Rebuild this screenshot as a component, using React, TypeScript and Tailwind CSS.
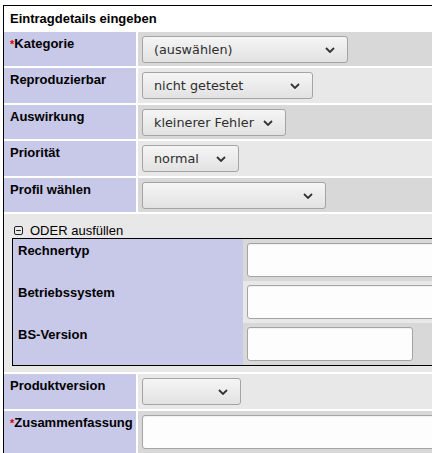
import type { ReactNode } from "react"

const LABEL = "w-[132px] shrink-0 bg-[#c8c8e8] pl-[6px] pt-[4px] font-bold text-black"

function Chevron() {
  return (
    <svg width="10" height="6" viewBox="0 0 10 6" className="shrink-0">
      <path d="M1 1 L5 5 L9 1" fill="none" stroke="#333333" strokeWidth="1.8" />
    </svg>
  )
}

function Select({ className, value }: { className: string; value?: string }) {
  return (
    <div
      className={`${className} flex h-[27px] items-center justify-between rounded-[3px] border border-[#a4a4a4] bg-linear-to-b from-[#f5f5f5] to-[#e2e2e2] pl-[11px] pr-[12px] font-['DejaVu_Sans',sans-serif] text-[12.8px] text-[#2e2e2e]`}
    >
      <span>{value}</span>
      <Chevron />
    </div>
  )
}

function TextBox({ className }: { className: string }) {
  return (
    <input
      type="text"
      readOnly
      className={`${className} block rounded-[3px] border border-[#a4a4a4] bg-[#fdfdfd] shadow-[inset_0_1px_1px_rgba(0,0,0,0.05)] outline-none`}
    />
  )
}

function Label({ text, required }: { text: string; required?: boolean }) {
  return (
    <>
      {required && <span className="text-[11px] text-[#e00000]">*</span>}
      {text}
    </>
  )
}

interface RowProps {
  label: string
  required?: boolean
  height: string
  shade: string
  children: ReactNode
}

function Row({ label, required, height, shade, children }: RowProps) {
  return (
    <div className={`flex gap-[2px] ${height}`}>
      <div className={LABEL}>
        <Label text={label} required={required} />
      </div>
      <div className={`flex-1 pl-[4px] pt-[4px] ${shade}`}>{children}</div>
    </div>
  )
}

function InnerRow({ label, shade, children }: { label: string; shade: string; children: ReactNode }) {
  return (
    <div className="flex h-[42px]">
      <div className="w-[230px] shrink-0 bg-[#c8c8e8] pl-[5px] pt-[4px] font-bold">{label}</div>
      <div className={`flex-1 pl-[4px] pt-[4px] ${shade}`}>{children}</div>
    </div>
  )
}

function CollapseIcon() {
  return (
    <svg width="9" height="9" viewBox="0 0 9 9" className="shrink-0">
      <rect x="0.5" y="0.5" width="8" height="8" rx="1.5" fill="none" stroke="#222222" strokeWidth="1" />
      <path d="M2.2 4.5 H6.8" stroke="#222222" strokeWidth="1" />
    </svg>
  )
}

export default function App() {
  return (
    <div className="h-[453px] w-[432px] overflow-hidden bg-white">
      <div className="ml-[3px] mt-[5px] w-[580px] border border-black bg-white font-['Liberation_Sans',Arial,sans-serif] text-[13px] leading-[15px] text-black">
        <div className="flex flex-col gap-[2px]">
          <div className="h-[24px] pl-[6px] pt-[5px] font-bold">Eintragdetails eingeben</div>

          <Row label="Kategorie" required height="h-[34px]" shade="bg-[#d8d8d8]">
            <Select className="w-[206px]" value="(auswählen)" />
          </Row>
          <Row label="Reproduzierbar" height="h-[35px]" shade="bg-[#e8e8e8]">
            <Select className="w-[171px]" value="nicht getestet" />
          </Row>
          <Row label="Auswirkung" height="h-[34px]" shade="bg-[#d8d8d8]">
            <Select className="w-[144px]" value="kleinerer Fehler" />
          </Row>
          <Row label="Priorität" height="h-[35px]" shade="bg-[#e8e8e8]">
            <Select className="w-[97px]" value="normal" />
          </Row>
          <Row label="Profil wählen" height="h-[34px]" shade="bg-[#d8d8d8]">
            <Select className="w-[184px]" />
          </Row>

          <div className="h-[158px] bg-[#e8e8e8] pl-[8px] pt-[8px]">
            <div className="flex h-[16px] items-center gap-[7px] pl-[2px]">
              <CollapseIcon />
              <span>ODER ausfüllen</span>
            </div>
            <div className="border border-black">
              <InnerRow label="Rechnertyp" shade="bg-[#d8d8d8]">
                <TextBox className="h-[34px] w-[270px]" />
              </InnerRow>
              <InnerRow label="Betriebssystem" shade="bg-[#e8e8e8]">
                <TextBox className="h-[34px] w-[270px]" />
              </InnerRow>
              <InnerRow label="BS-Version" shade="bg-[#d8d8d8]">
                <TextBox className="h-[34px] w-[166px]" />
              </InnerRow>
            </div>
          </div>

          <Row label="Produktversion" height="h-[35px]" shade="bg-[#e8e8e8]">
            <Select className="w-[99px]" />
          </Row>
          <Row label="Zusammenfassung" required height="h-[60px]" shade="bg-[#d8d8d8]">
            <TextBox className="h-[34px] w-[420px]" />
          </Row>
        </div>
      </div>
    </div>
  )
}
